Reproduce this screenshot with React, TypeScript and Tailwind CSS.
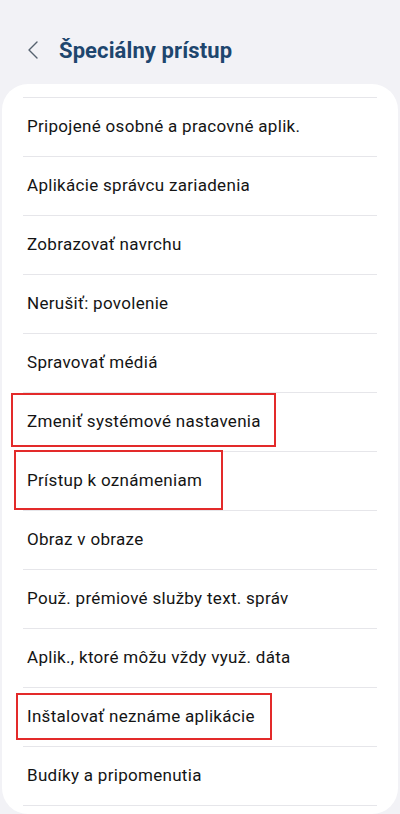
import React from "react";

const items = [
  "Pripojené osobné a pracovné aplik.",
  "Aplikácie správcu zariadenia",
  "Zobrazovať navrchu",
  "Nerušiť: povolenie",
  "Spravovať médiá",
  "Zmeniť systémové nastavenia",
  "Prístup k oznámeniam",
  "Obraz v obraze",
  "Použ. prémiové služby text. správ",
  "Aplik., ktoré môžu vždy využ. dáta",
  "Inštalovať neznáme aplikácie",
  "Budíky a pripomenutia",
];

export default function App() {
  return (
    <div
      className="relative w-[400px] h-[814px] overflow-hidden bg-[#f2f2f6]"
      style={{ fontFamily: "Roboto, 'Noto Sans', sans-serif" }}
    >
      <div className="flex items-center h-[84px] pl-[26px] pt-[16px]">
        <svg width="14" height="20" viewBox="0 0 14 20" className="mr-[19px]">
          <path d="M11 2 L3 10 L11 18" fill="none" stroke="#56626f" strokeWidth="1.4" strokeLinecap="round" strokeLinejoin="round" />
        </svg>
        <span className="text-[22px] font-bold text-[#1e466e] tracking-[0.1px]">Špeciálny prístup</span>
      </div>
      <div className="mx-[2px] bg-white rounded-[26px] pt-[13px] pb-[8px] px-[21px]">
        <div className="h-px bg-[#e6e6ea]" />
        {items.map((t) => (
          <div key={t}>
            <div className="h-[58px] flex items-center pl-[4px] text-[17px] tracking-[0.3px] text-[#141414]">{t}</div>
            <div className="h-px bg-[#e6e6ea]" />
          </div>
        ))}
      </div>
      <div className="absolute left-[11px] top-[393px] w-[265px] h-[54px] border-2 border-[#e32a2a]" />
      <div className="absolute left-[14px] top-[450px] w-[209px] h-[60px] border-2 border-[#e32a2a]" />
      <div className="absolute left-[16px] top-[693px] w-[256px] h-[47px] border-2 border-[#e32a2a]" />
    </div>
  );
}
